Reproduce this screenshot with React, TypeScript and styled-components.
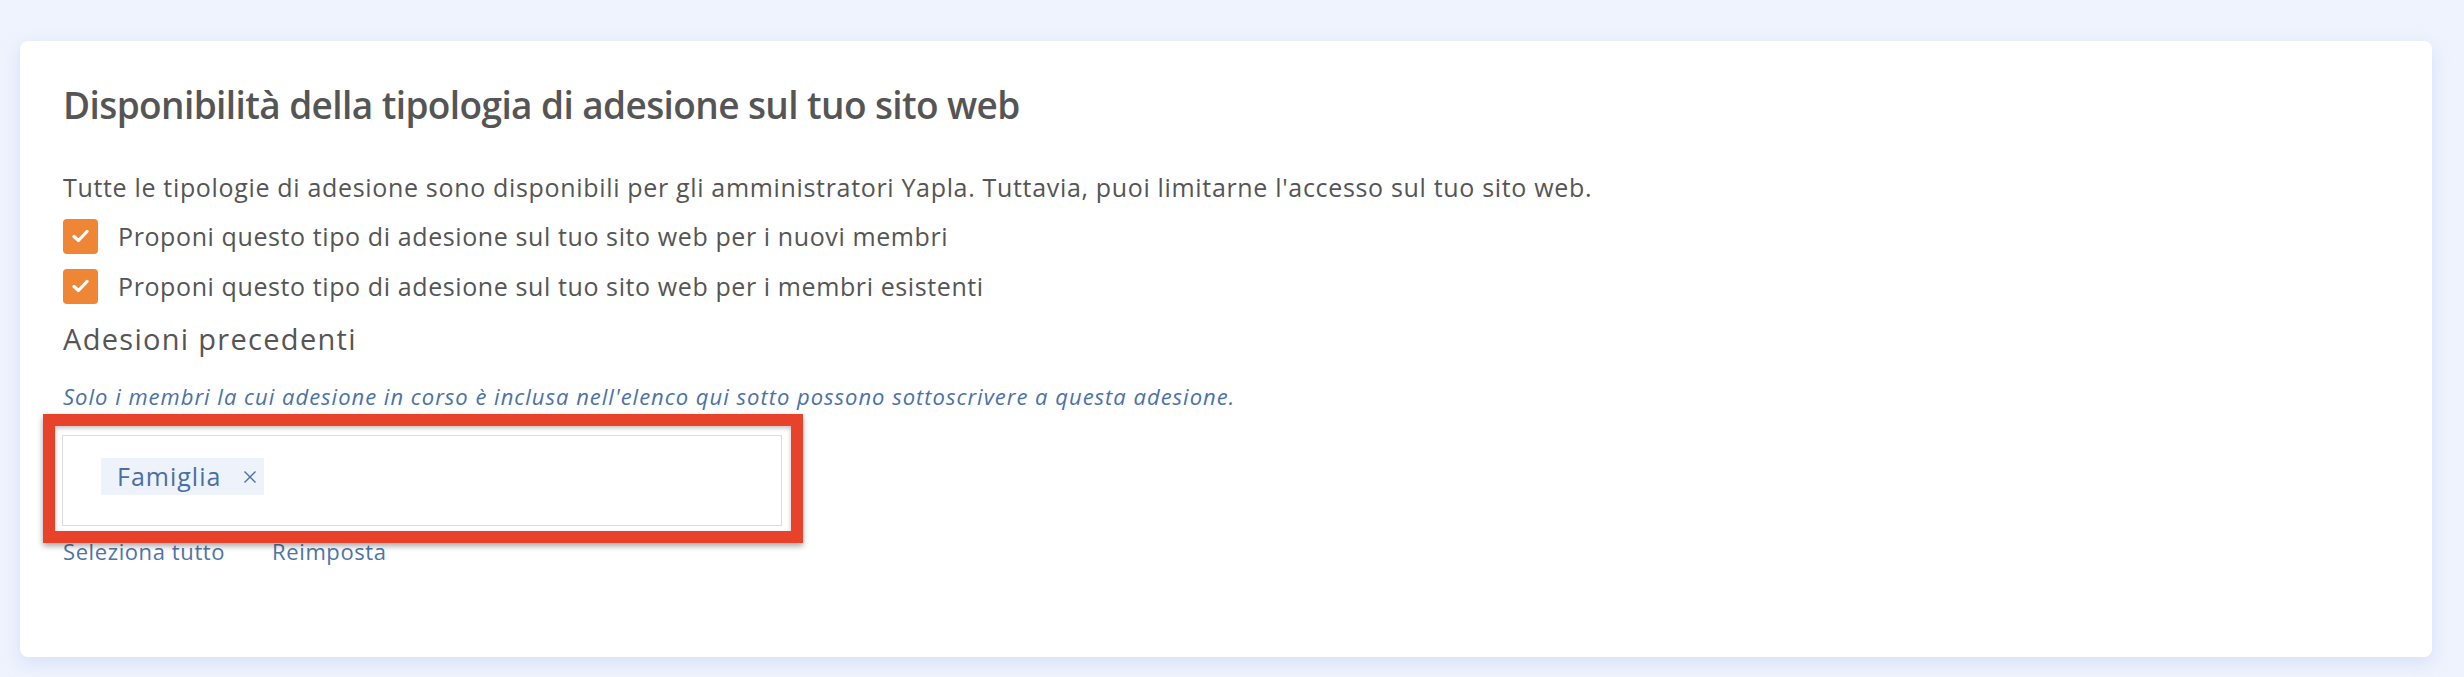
import React from "react";
import styled, { createGlobalStyle } from "styled-components";

const Global = createGlobalStyle`
  html, body { margin: 0; padding: 0; background: #eff3fd; }
  body { font-family: "Open Sans", "Lato", sans-serif; }
`;

const Page = styled.div`
  padding: 41px 32px 20px 20px;
  min-height: 677px;
  box-sizing: border-box;
`;

const Card = styled.section`
  background: #ffffff;
  border-radius: 8px;
  box-shadow: 0 6px 18px rgba(170, 190, 240, 0.35);
  padding: 41px 43px 91px 43px;
  display: flex;
  flex-direction: column;
  align-items: flex-start;
`;

const Title = styled.h2`
  margin: 0;
  font-size: 37px;
  line-height: 45px;
  font-weight: 600;
  letter-spacing: -0.6px;
  color: #555555;
`;

const Text = styled.p`
  margin: 42px 0 0 0;
  font-size: 25px;
  line-height: 36px;
  letter-spacing: 0.67px;
  color: #555555;
`;

const CheckRow = styled.label<{ $first?: boolean }>`
  display: flex;
  align-items: center;
  gap: 20px;
  margin-top: ${(p) => (p.$first ? "13px" : "14px")};
  font-size: 25px;
  line-height: 36px;
  letter-spacing: 0.6px;
  color: #555555;
`;

const Box = styled.span`
  width: 35px;
  height: 35px;
  border-radius: 4px;
  background: #ef8636;
  display: flex;
  align-items: center;
  justify-content: center;
  flex-shrink: 0;
`;

const SubTitle = styled.h3`
  margin: 17px 0 0 0;
  font-size: 29px;
  line-height: 36px;
  font-weight: 400;
  letter-spacing: 1.3px;
  color: #555555;
`;

const Hint = styled.p`
  margin: 24px 0 0 0;
  font-size: 22px;
  line-height: 30px;
  font-style: italic;
  letter-spacing: 1px;
  color: #4b72a6;
`;

const FieldWrap = styled.div`
  position: relative;
  margin-top: 24px;
  margin-left: -1px;
`;

const Field = styled.div`
  width: 720px;
  height: 91px;
  box-sizing: border-box;
  border: 1.5px solid #dcdcdc;
  background: #fff;
  display: flex;
  align-items: flex-start;
  padding: 22px 0 0 38px;
`;

const Highlight = styled.div`
  position: absolute;
  left: -19px;
  top: -21px;
  right: -21px;
  bottom: -17px;
  border: 12px solid #e8432a;
  box-shadow: 0 3px 6px rgba(0, 0, 0, 0.35), inset 0 2px 4px rgba(0, 0, 0, 0.25);
  pointer-events: none;
`;

const Tag = styled.span`
  display: inline-flex;
  align-items: center;
  height: 37px;
  box-sizing: border-box;
  padding: 0 7px 0 16px;
  gap: 22px;
  background: #eef3fb;
  color: #4b6fa1;
  font-size: 25px;
  line-height: 37px;
  letter-spacing: 1px;
`;

const Links = styled.div`
  display: flex;
  gap: 47px;
  margin-top: 10px;
`;

const LinkBtn = styled.a`
  font-size: 22px;
  line-height: 30px;
  letter-spacing: 0.6px;
  color: #4f74a6;
  text-decoration: none;
  cursor: pointer;
`;

const Check = () => (
  <svg width="17" height="14" viewBox="0 0 17 14">
    <path d="M2 7.5 L6.5 11.5 L15 2.5" fill="none" stroke="#fff" strokeWidth="3.2" strokeLinecap="round" strokeLinejoin="round" />
  </svg>
);

const Cross = () => (
  <svg width="14" height="14" viewBox="0 0 14 14">
    <path d="M1.5 1.5 L12.5 12.5 M12.5 1.5 L1.5 12.5" stroke="#4b6fa1" strokeWidth="1.4" fill="none" />
  </svg>
);

export default function App() {
  return (
    <>
      <Global />
      <Page>
        <Card>
          <Title>Disponibilità della tipologia di adesione sul tuo sito web</Title>
          <Text>
            Tutte le tipologie di adesione sono disponibili per gli amministratori Yapla. Tuttavia, puoi limitarne l'accesso sul tuo sito web.
          </Text>
          <CheckRow $first>
            <Box><Check /></Box>
            Proponi questo tipo di adesione sul tuo sito web per i nuovi membri
          </CheckRow>
          <CheckRow>
            <Box><Check /></Box>
            Proponi questo tipo di adesione sul tuo sito web per i membri esistenti
          </CheckRow>
          <SubTitle>Adesioni precedenti</SubTitle>
          <Hint>Solo i membri la cui adesione in corso è inclusa nell'elenco qui sotto possono sottoscrivere a questa adesione.</Hint>
          <FieldWrap>
            <Field>
              <Tag>
                Famiglia
                <Cross />
              </Tag>
            </Field>
            <Highlight />
          </FieldWrap>
          <Links>
            <LinkBtn>Seleziona tutto</LinkBtn>
            <LinkBtn>Reimposta</LinkBtn>
          </Links>
        </Card>
      </Page>
    </>
  );
}
